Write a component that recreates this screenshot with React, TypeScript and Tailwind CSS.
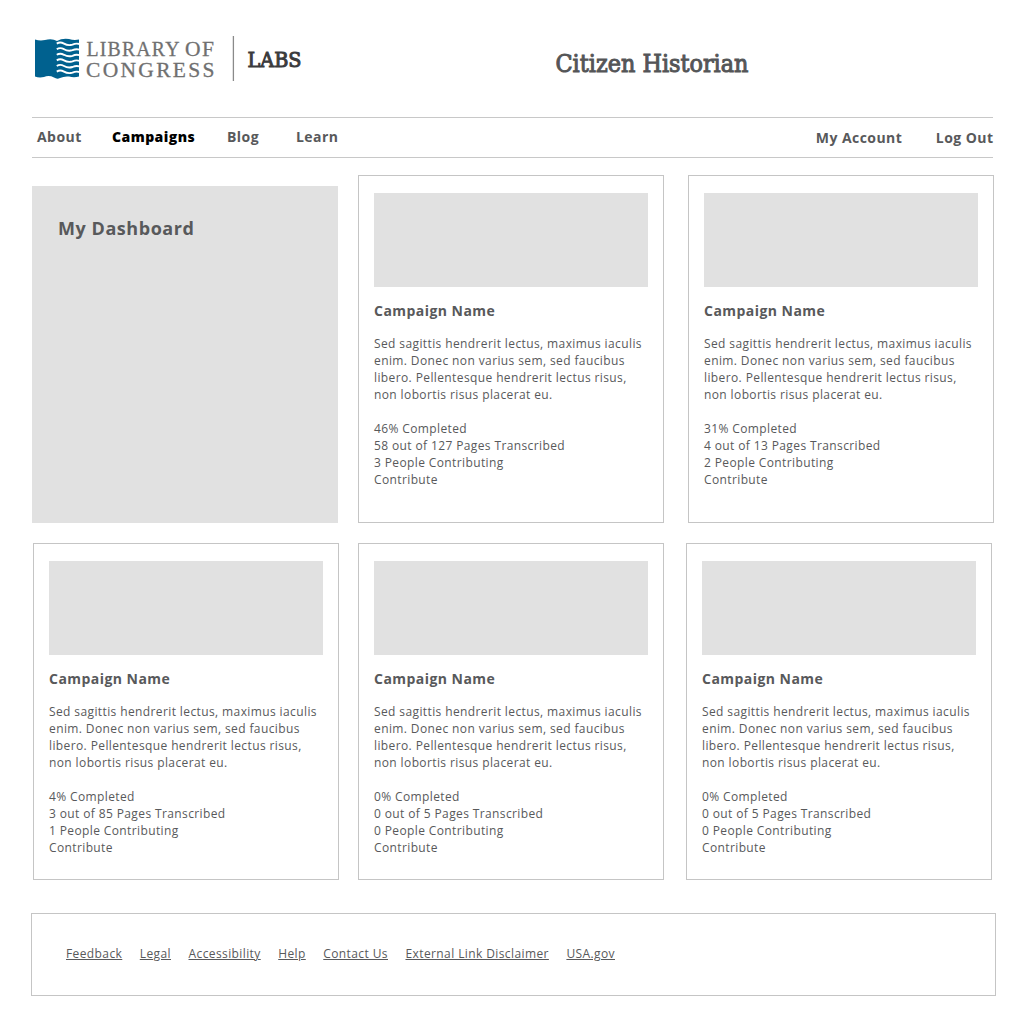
type Campaign = { done: string; pages: string; people: string };

const featured: Campaign[] = [
  { done: '46%', pages: '58 out of 127', people: '3' },
  { done: '31%', pages: '4 out of 13', people: '2' },
];

const others: Campaign[] = [
  { done: '4%', pages: '3 out of 85', people: '1' },
  { done: '0%', pages: '0 out of 5', people: '0' },
  { done: '0%', pages: '0 out of 5', people: '0' },
];

const footerLinks = ['Feedback', 'Legal', 'Accessibility', 'Help', 'Contact Us', 'External Link Disclaimer', 'USA.gov'];

function Logo() {
  return (
    <svg width="290" height="60" viewBox="30 30 290 60" className="block" role="img" aria-label="Library of Congress Labs">
      <path
        d="M35 39.5 Q40 41 45 40 Q52 38 57 41 Q62 38 69 39 Q74 40.5 79 39.5 V76.5 Q74 78 69 76.5 Q64 76 60 78 Q57 79.5 54 77.5 Q49 75 44 77 Q39 78 35 76.5 Z"
        fill="#00618f"
      />
      <g fill="none" stroke="#fff" strokeWidth="1.9">
        {[43, 48.6, 54.2, 59.8, 65.4, 71].map((y) => (
          <path key={y} d={`M56.8 ${y + 0.6} Q60 ${y - 1.6} 64 ${y + 0.6} Q68 ${y + 3} 72.5 ${y + 1.6} Q76 ${y} 79.5 ${y + 1}`} />
        ))}
      </g>
      <g fill="#707070" stroke="#707070" strokeWidth="0.3" fontFamily="'Liberation Serif', serif" fontSize="21.5">
        <text transform="translate(86.5 56) scale(.92 1)" textLength="101" lengthAdjust="spacing">LIBRARY</text>
        <text transform="translate(185 56) scale(1 1)" textLength="29" lengthAdjust="spacing">OF</text>
        <text transform="translate(86 77) scale(1 1)" textLength="128.5" lengthAdjust="spacing">CONGRESS</text>
      </g>
      <path d="M233.4 36V81" stroke="#8a8a8a" strokeWidth="1.3" />
      <text x="247.5" y="66.5" fontFamily="'Roboto Slab', 'DejaVu Serif', serif" fontSize="20" fill="#3b3b3d" stroke="#3b3b3d" strokeWidth="1" textLength="54" lengthAdjust="spacingAndGlyphs">
        LABS
      </text>
    </svg>
  );
}

function Card({ campaign, tall = false }: { campaign: Campaign; tall?: boolean }) {
  return (
    <article className={`w-[306px] shrink-0 border border-[#c5c5c5] px-[15px] pt-[17px] ${tall ? 'h-[348px]' : 'h-[337px]'}`}>
      <div className="h-[94px] bg-[#e1e1e1]" />
      <h3 className="mt-[14px] text-[14px] leading-[20px] font-bold tracking-[0.46px]">Campaign Name</h3>
      <p className="mt-[14px] text-[12px] leading-[17px] tracking-[0.39px] whitespace-nowrap">
        Sed sagittis hendrerit lectus, maximus iaculis
        <br />
        enim. Donec non varius sem, sed faucibus
        <br />
        libero. Pellentesque hendrerit lectus risus,
        <br />
        non lobortis risus placerat eu.
      </p>
      <ul className="mt-[17px] text-[12px] leading-[17px] tracking-[0.38px]">
        <li>{`${campaign.done} Completed`}</li>
        <li>{`${campaign.pages} Pages Transcribed`}</li>
        <li>{`${campaign.people} People Contributing`}</li>
        <li>Contribute</li>
      </ul>
    </article>
  );
}

export default function App() {
  return (
    <div className="h-[1032px] w-[1024px] bg-white pt-[30px] font-['Open_Sans',sans-serif] text-[#58595b]">
      <header className="flex h-[87px] pl-[30px]">
        <Logo />
        <h1 className="ml-[233px] pt-[13px] leading-[30px]">
          <svg width="204" height="40" className="block">
            <text x="2.5" y="28.5" fontFamily="'Roboto Slab', 'DejaVu Serif', serif" fontSize="24" fill="#545557" stroke="#545557" strokeWidth="1" textLength="193" lengthAdjust="spacingAndGlyphs">
              Citizen Historian
            </text>
          </svg>
        </h1>
      </header>

      <nav className="ml-[32px] flex h-[41px] w-[961px] border-y border-[#c8c8c8] pt-[9px] pl-[5px] text-[14px] leading-[20px] font-bold tracking-[0.45px] whitespace-nowrap">
        <a className="w-[75px]">About</a>
        <a className="w-[115px] font-extrabold text-black">Campaigns</a>
        <a className="w-[69px]">Blog</a>
        <a>Learn</a>
        <div className="mr-[-0.5px] ml-auto flex gap-[33.5px] pt-px">
          <a>My Account</a>
          <a>Log Out</a>
        </div>
      </nav>

      <main>
        <section className="mt-[17px] ml-[32px] flex">
          <aside className="mt-[11px] mr-[20px] h-[337px] w-[306px] bg-[#e1e1e1] pt-[29px] pl-[26px]">
            <h2 className="text-[18px] leading-[26px] font-bold tracking-[0.55px]">My Dashboard</h2>
          </aside>
          <div className="flex gap-[24px]">
            {featured.map((c, i) => (
              <Card key={i} campaign={c} tall />
            ))}
          </div>
        </section>
        <section className="mt-[20px] ml-[33px] flex w-[959px]">
          <div className="mr-[19px]">
            <Card campaign={others[0]} />
          </div>
          <div className="flex gap-[22px]">
            <Card campaign={others[1]} />
            <Card campaign={others[2]} />
          </div>
        </section>
      </main>

      <footer className="mt-[33px] ml-[31px] flex h-[83px] w-[965px] gap-[17.5px] border border-[#c5c5c5] pt-[31px] pl-[34px] text-[12px] leading-[17px] tracking-[0.4px] whitespace-nowrap">
        {footerLinks.map((label) => (
          <a key={label} className="underline">{label}</a>
        ))}
      </footer>
    </div>
  );
}
